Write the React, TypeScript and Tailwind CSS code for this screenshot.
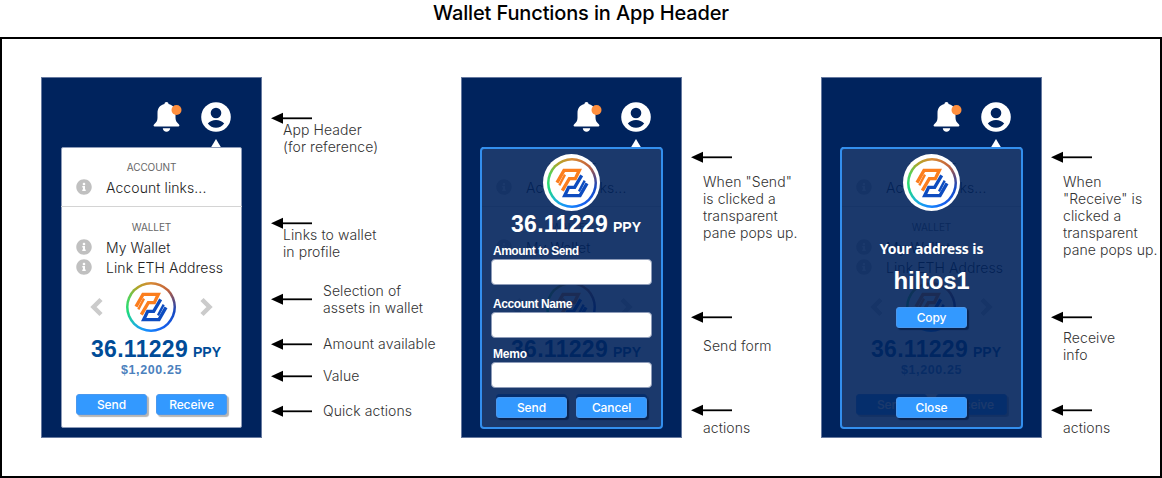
import type { ReactNode } from "react";
import { FaInfoCircle } from "react-icons/fa";

function Mark() {
  return (
    <>
      <path d="M30 74 51 37H97L85 62H67L46 98" strokeWidth="10" />
      <path d="M37 82 54 50" strokeWidth="7" />
    </>
  );
}

function Logo() {
  return (
    <svg viewBox="0 0 150 150" className="block h-[50px] w-[50px]" fill="none">
      <circle cx="75" cy="75" r="75" fill="#fff" />
      <foreignObject x="0" y="0" width="150" height="150">
        <div className="h-[150px] w-[150px] rounded-full bg-[conic-gradient(from_0deg,#d78a35,#c2623a_45deg,#5b4a80_75deg,#1648c0_100deg,#1660ee_150deg,#168cff_190deg,#1cb8d0_225deg,#1fdc78_260deg,#4fd45c_290deg,#b0a428_325deg,#d78a35)]" />
      </foreignObject>
      <circle cx="75" cy="75" r="67.500" fill="#fff" />
      <g stroke="#fb7e1e" strokeLinejoin="miter">
        <Mark />
      </g>
      <g stroke="#0d4cc0" strokeLinejoin="miter" transform="rotate(180 75 75)">
        <Mark />
      </g>
    </svg>
  );
}

function Bell() {
  return (
    <svg viewBox="0 0 28 31" className="block h-[31px] w-[29px]">
      <path
        d="M13 0c1.3 0 2 .8 2 2.1C19.500 3 22 6.500 22 11v5c0 3 1.500 4.500 3.500 6.500.8.8.5 2-.7 2H1.200C0 24.500-.3 23.300.5 22.500 2.500 20.500 4 19 4 16v-5c0-4.500 2.500-8 7-8.900C11 .8 11.700 0 13 0ZM9.300 26.300h7.400c-.2 2.200-1.700 3.500-3.700 3.500s-3.500-1.300-3.700-3.500Z"
        fill="#fff"
      />
      <circle cx="23" cy="8" r="5" fill="#ff8f3e" />
    </svg>
  );
}

function Avatar() {
  return (
    <svg viewBox="0 0 30 30" className="block h-[30px] w-[30px]">
      <circle cx="15" cy="15" r="14.800" fill="#fff" />
      <circle cx="15" cy="11" r="5.300" fill="#00235d" />
      <path d="M6.800 21.500c2-2.300 5-3.600 8.200-3.600s6.200 1.300 8.200 3.600c-2 2.800-5 4.300-8.200 4.300s-6.200-1.500-8.200-4.300Z" fill="#00235d" />
    </svg>
  );
}

function Chevron({ flip }: { flip?: boolean }) {
  return (
    <svg viewBox="0 0 14 20" className={flip ? "block h-5 w-[14px] -scale-x-100" : "block h-5 w-[14px]"}>
      <path d="M11 2.500 3.500 10 11 17.500" fill="none" stroke="currentColor" strokeWidth="4.500" />
    </svg>
  );
}

function Button({ children, dark }: { children: ReactNode; dark?: boolean }) {
  return (
    <button
      className={`flex h-[21px] w-[71px] items-center justify-center rounded-[3px] border border-[#4a98ee] bg-[#3399ff] font-[Inter,sans-serif] text-[12px] font-medium leading-none tracking-[-0.1px] text-white ${
        dark ? "shadow-[2px_2px_1px_#0a2450]" : "shadow-[2px_2px_1px_#b5b5b5]"
      }`}
    >
      {children}
    </button>
  );
}

function Amount() {
  return (
    <div className="flex h-[26px] items-baseline justify-center gap-[5px] pl-[9px] font-bold leading-[26px]">
      <span className="text-[23px] tracking-[0.3px]">36.11229</span>
      <span className="text-[14px]">PPY</span>
    </div>
  );
}

function LinkRow({ children }: { children: ReactNode }) {
  return (
    <div className="flex h-5 items-center gap-[14px] pl-[15px] font-[Inter,sans-serif] text-[14px] font-light leading-5 tracking-[0.08px] text-[#222]">
      <FaInfoCircle className="mb-[3px] h-4 w-4 text-[#c0c0c0]" />
      <span className="-mt-px whitespace-nowrap">{children}</span>
    </div>
  );
}

function SectionTitle({ children }: { children: ReactNode }) {
  return (
    <div className="h-[14px] text-center font-[Inter,sans-serif] text-[10px] leading-[14px] tracking-[-0.1px] text-[#666]">{children}</div>
  );
}

function Phone({ overlay }: { overlay?: ReactNode }) {
  return (
    <div className="h-[361px] w-[221px] shrink-0 border border-[#66799f] bg-[#00235d] pl-[19px] pt-6">
      <div className="flex h-[37px] items-start pl-[92px]">
        <Bell />
        <div className="ml-[19px] flex flex-col items-center">
          <Avatar />
          <svg viewBox="0 0 12 10" className="mt-[7px] block h-[10px] w-3">
            <path d="M6 0 12 10H0Z" fill="#fff" />
          </svg>
        </div>
      </div>
      <div className="relative mt-[8px] h-[281px] w-[181px] rounded-[2px] border border-[#8d9bb8] bg-white pt-[12px] font-['Liberation_Sans',Arial,sans-serif]">
        <div className="-mx-px">
          <SectionTitle>ACCOUNT</SectionTitle>
          <div className="mt-[4px] h-[29px] border-b border-[#d4d4d4]">
            <LinkRow>Account links...</LinkRow>
          </div>
          <div className="mt-[13px]">
            <SectionTitle>WALLET</SectionTitle>
          </div>
          <div className="mt-1">
            <LinkRow>My Wallet</LinkRow>
            <LinkRow>Link ETH Address</LinkRow>
          </div>
          <div className="mt-1 flex h-[50px] items-center justify-between px-[29px] text-[#cbcbcb]">
            <Chevron />
            <div className="-ml-px">
              <Logo />
            </div>
            <Chevron flip />
          </div>
          <div className="mt-1 text-[#004c98]">
            <Amount />
          </div>
          <div className="h-4 text-center text-[12.5px] font-bold leading-4 tracking-[0.6px] text-[#4b81bd]">$1,200.25</div>
          <div className="mt-[16px] flex gap-[9px] pl-[15px]">
            <Button>Send</Button>
            <Button>Receive</Button>
          </div>
        </div>
        {overlay && (
          <div className="absolute -inset-x-[2px] -bottom-[2px] -top-px rounded-[4px] border-2 border-[#338fee] bg-[#00215bE4] text-white">
            {overlay}
          </div>
        )}
      </div>
    </div>
  );
}

function OverlayLogo() {
  return (
    <div className="mx-auto flex h-[57px] w-[57px] items-center justify-center rounded-full bg-white">
      <Logo />
    </div>
  );
}

function Field({ label, tracking }: { label: string; tracking: string }) {
  return (
    <label className="block w-[161px] text-[12px] font-bold leading-4">
      <span className={`block whitespace-nowrap pl-[2px] ${tracking}`}>{label}</span>
      <input className="block h-[26px] w-[161px] rounded-[4px] border border-[#8d9bb8] bg-white" />
    </label>
  );
}

function SendPane() {
  return (
    <div className="flex h-full flex-col pt-[5px]">
      <OverlayLogo />
      <Amount />
      <div className="mt-[6px] flex flex-col pl-[9px]">
        <Field label="Amount to Send" tracking="tracking-[-0.5px]" />
        <div className="mt-[11px]">
          <Field label="Account Name" tracking="tracking-[-0.42px]" />
        </div>
        <div className="mt-[8px]">
          <Field label="Memo" tracking="tracking-[-0.2px]" />
        </div>
      </div>
      <div className="mt-[9px] flex gap-[9px] pl-[14px]">
        <Button dark>Send</Button>
        <Button dark>Cancel</Button>
      </div>
    </div>
  );
}

function ReceivePane() {
  return (
    <div className="flex h-full flex-col items-center pt-[5px]">
      <OverlayLogo />
      <div className="mt-[28px] h-5 whitespace-nowrap font-['Noto_Sans',sans-serif] text-[14px] font-bold leading-5 tracking-[-0.1px]">Your address is</div>
      <div className="mt-[8px] h-[28px] text-[24px] font-bold leading-[28px] tracking-[-0.2px]">hiltos1</div>
      <div className="mt-[12px]">
        <Button dark>Copy</Button>
      </div>
      <div className="mt-[69px]">
        <Button dark>Close</Button>
      </div>
    </div>
  );
}

function Arrow() {
  return (
    <svg viewBox="0 0 41 12" className="block h-3 w-[41px] shrink-0">
      <path d="M0 6.300 12 0.800V11.800Z" fill="#000" />
      <path d="M10 6.300H41" stroke="#000" strokeWidth="1.800" />
    </svg>
  );
}

const noteText =
  "whitespace-nowrap font-[Inter,sans-serif] text-[14px] font-light leading-[17px] tracking-[0.08px] text-[#333]";

function NoteBelow({ lines, className, shift = "" }: { lines: string[]; className: string; shift?: string }) {
  return (
    <div className={`flex flex-col ${className}`}>
      <Arrow />
      <div className={`pl-[12px] ${noteText} ${shift}`}>
        {lines.map((l) => (
          <div key={l}>{l}</div>
        ))}
      </div>
    </div>
  );
}

function NoteBeside({ lines }: { lines: string[] }) {
  return (
    <div className="flex items-center gap-[11px]">
      <Arrow />
      <div className={noteText}>
        {lines.map((l) => (
          <div key={l}>{l}</div>
        ))}
      </div>
    </div>
  );
}

export default function App() {
  return (
    <main className="flex h-[478px] w-[1162px] flex-col overflow-hidden bg-white font-[Inter,sans-serif]">
      <h1 className="h-[37px] text-center text-[20px] font-medium leading-[27px] tracking-[-0.13px] text-black">Wallet Functions in App Header</h1>
      <section className="flex h-[441px] border-2 border-black pl-[39px] pt-[38px]">
        <Phone />
        <div className="w-[199px] shrink-0 pl-[9px] pt-[35px]">
          <NoteBelow className="h-[105px]" shift="-mt-[3px]" lines={["App Header", "(for reference)"]} />
          <NoteBelow className="h-[65px]" shift="-mt-[3px]" lines={["Links to wallet", "in profile"]} />
          <div className="flex flex-col">
            <NoteBeside lines={["Selection of", "assets in wallet"]} />
            <div className="mt-[19px]">
              <NoteBeside lines={["Amount available"]} />
            </div>
            <div className="mt-[15px]">
              <NoteBeside lines={["Value"]} />
            </div>
            <div className="mt-[18px]">
              <NoteBeside lines={["Quick actions"]} />
            </div>
          </div>
        </div>
        <Phone overlay={<SendPane />} />
        <div className="w-[139px] shrink-0 pl-[9px] pt-[74px]">
          <NoteBelow className="h-[160px] gap-[10px]" lines={['When "Send"', "is clicked a", "transparent", "pane pops up."]} />
          <NoteBelow className="h-[93px] gap-[14px]" lines={["Send form"]} />
          <NoteBelow className="gap-[3px]" lines={["actions"]} />
        </div>
        <Phone overlay={<ReceivePane />} />
        <div className="w-[118px] shrink-0 pl-[9px] pt-[74px]">
          <NoteBelow className="h-[160px] gap-[10px]" lines={["When", '"Receive" is', "clicked a", "transparent", "pane pops up."]} />
          <NoteBelow className="h-[93px] gap-[6px]" lines={["Receive", "info"]} />
          <NoteBelow className="gap-[3px]" lines={["actions"]} />
        </div>
      </section>
    </main>
  );
}
